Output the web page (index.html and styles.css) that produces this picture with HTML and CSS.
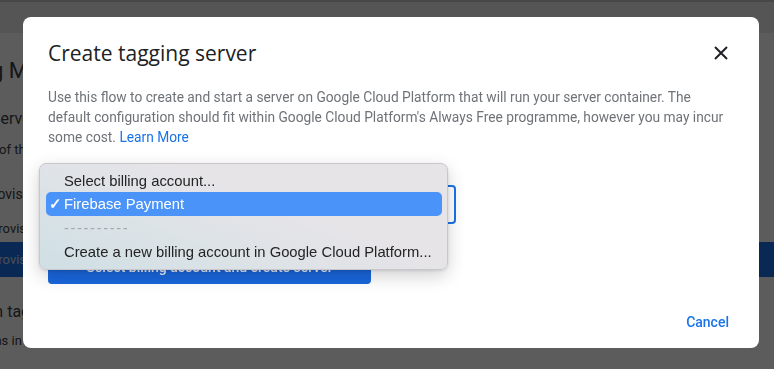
FILE: index.html
```html
<!DOCTYPE html>
<html lang="en">
<head>
    <meta charset="UTF-8">
    <meta name="viewport" content="width=device-width, initial-scale=1.0">
    <link rel="stylesheet" href="styles.css">
    <title>Create tagging server</title>
</head>
<body>
    <div class="pagina">
        <header class="barra"></header>
        <main class="contenido">
            <h1 class="titulo-fondo">Tag Manager</h1>
            <p class="linea grande l1">Server</p>
            <p class="linea l2">of the</p>
            <p class="linea l3">Provision</p>
            <p class="linea l4">provision</p>
            <div class="banda"><span>provision</span></div>
            <p class="linea grande l5">In tagging</p>
            <p class="linea l6">ons in</p>
        </main>
    </div>
    <div class="velo"></div>

    <div class="dialogo">
        <div class="cabecera">
            <h2>Create tagging server</h2>
            <button class="cerrar" aria-label="Close">
                <svg width="14" height="14" viewBox="0 0 14 14"><path d="M1 1L13 13M13 1L1 13" stroke="#202124" stroke-width="2" fill="none"/></svg>
            </button>
        </div>
        <p class="texto">Use this flow to create and start a server on Google Cloud Platform that will run your server container. The default configuration should fit within Google Cloud Platform's Always Free programme, however you may incur some cost. <a href="#">Learn More</a></p>
        <div class="selector"></div>
        <button class="boton">Select billing account and create server</button>
        <div class="pie">
            <button class="cancelar">Cancel</button>
        </div>

        <!-- menu nativo del select abierto -->
        <ul class="menu">
            <li>Select billing account...</li>
            <li class="activo"><span class="check">✓</span>Firebase Payment</li>
            <li class="separador">----------</li>
            <li>Create a new billing account in Google Cloud Platform...</li>
        </ul>
    </div>
</body>
</html>
```

FILE: styles.css
```css
*{
    padding: 0;
    margin: 0;
    box-sizing: border-box;
}
html,body{
    width: 100%;
    height: 100%;
    overflow: hidden;
}
body{
    font-family: Roboto, "Liberation Sans", sans-serif;
    background-color: #fff;
}
.pagina{
    height: 100%;
}
.barra{
    height: 33px;
    background-color: #ececec;
    border-top: 2px solid #c8c8c8;
}
.titulo-fondo{
    font-size: 22px;
    font-weight: 400;
    color: #3c4043;
    margin: 25px 0 0 -33px;
    white-space: nowrap;
}
.linea{
    font-size: 13px;
    white-space: nowrap;
    color: #3c4043;
}
.grande{
    font-size: 16px;
}
.l1{ margin: 26px 0 0 -9px; }
.l2{ margin: 14px 0 0 -1px; }
.l3{ margin: 29px 0 0 -16px; font-size: 14px; }
.l4{ margin: 19px 0 0 -9px; }
.l5{ margin: 25px 0 0 -10px; }
.l6{ margin: 12px 0 0 -13px; }
.banda{
    margin-top: 6px;
    height: 35px;
    background-color: #1a73e8;
    color: #cfd8ea;
    font-size: 13px;
    display: flex;
    align-items: center;
}
.banda span{
    margin-left: -9px;
}
.velo{
    position: fixed;
    inset: 0;
    background-color: rgba(0, 0, 0, 0.64);
}

.dialogo{
    position: absolute;
    left: 23px;
    top: 17px;
    width: 736px;
    height: 331px;
    background-color: #fff;
    border-radius: 8px;
    padding: 22px 24px 0 25px;
    display: flex;
    flex-direction: column;
}
.cabecera{
    display: flex;
    justify-content: space-between;
    align-items: center;
}
.cabecera h2{
    font-family: "Open Sans", Roboto, sans-serif;
    font-size: 21px;
    font-weight: 400;
    color: #202124;
    line-height: 28px;
}
.cerrar{
    background: none;
    border: none;
    width: 24px;
    height: 24px;
    display: flex;
    align-items: center;
    justify-content: center;
    margin-right: 2px;
}
.texto{
    margin-top: 20px;
    font-size: 13.75px;
    line-height: 20px;
    color: #6f7378;
    max-width: 684px;
}
.texto a{
    color: #1a73e8;
    text-decoration: none;
}
.selector{
    margin-top: 38px;
    width: 408px;
    height: 39px;
    border: 2px solid #1a73e8;
    border-radius: 4px;
}
.boton{
    margin-top: 26px;
    width: 323px;
    height: 34px;
    border: none;
    border-radius: 4px;
    background-color: #1a66dc;
    color: #e8effc;
    font-family: Roboto, sans-serif;
    font-size: 14px;
    font-weight: 500;
}
.pie{
    margin-top: auto;
    height: 52px;
    display: flex;
    justify-content: flex-end;
    align-items: center;
}
.cancelar{
    background: none;
    border: none;
    color: #1a73e8;
    font-family: Roboto, sans-serif;
    font-size: 14px;
    font-weight: 500;
    padding: 6px 6px;
}

.menu{
    position: absolute;
    left: 16px;
    top: 146px;
    width: 409px;
    list-style: none;
    padding: 6px 5px 6px 6px;
    border: 1px solid #c9c7cb;
    border-radius: 7px;
    background: linear-gradient(20deg, #cfdfe4 0%, #dde3e7 35%, #e6e4e7 60%, #e6e4e7 100%);
    box-shadow: 0 6px 18px rgba(0, 0, 0, 0.18), 0 1px 3px rgba(0, 0, 0, 0.12);
    font-family: "Liberation Sans", Arial, sans-serif;
    font-size: 14.8px;
    color: #242424;
}
.menu li{
    height: 22px;
    line-height: 22px;
    padding-left: 18px;
    position: relative;
    white-space: nowrap;
}
.menu .activo{
    height: 24px;
    line-height: 24px;
    background-color: #4a93f8;
    color: #fff;
    border-radius: 5px;
}
.check{
    position: absolute;
    left: 3px;
    font-weight: 700;
}
.menu .separador{
    height: 25px;
    line-height: 25px;
    color: #a7a9ad;
    letter-spacing: 1.6px;
}
```
